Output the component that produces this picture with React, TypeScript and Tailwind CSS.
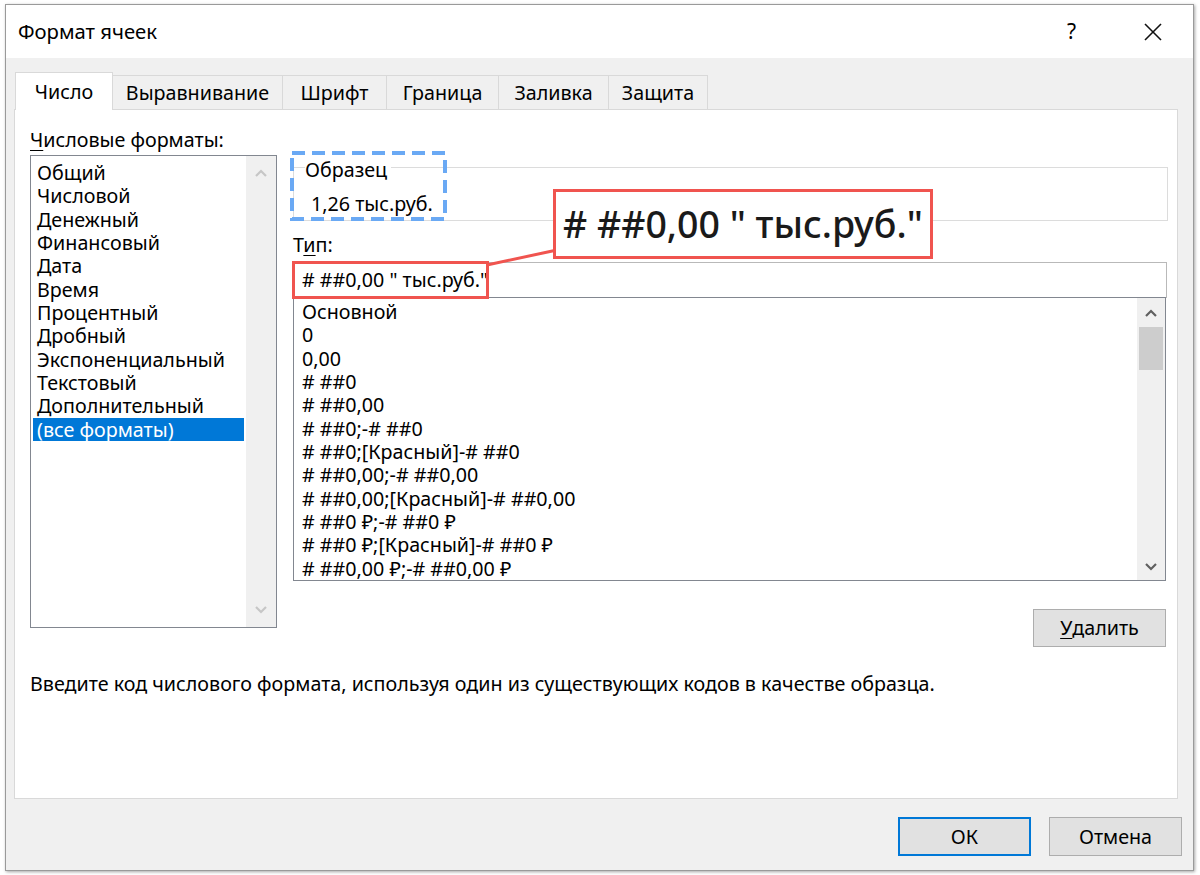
import React from "react";

const cats = [
  "Общий",
  "Числовой",
  "Денежный",
  "Финансовый",
  "Дата",
  "Время",
  "Процентный",
  "Дробный",
  "Экспоненциальный",
  "Текстовый",
  "Дополнительный",
  "(все форматы)",
];

const types = [
  "Основной",
  "0",
  "0,00",
  "# ##0",
  "# ##0,00",
  "# ##0;-# ##0",
  "# ##0;[Красный]-# ##0",
  "# ##0,00;-# ##0,00",
  "# ##0,00;[Красный]-# ##0,00",
  "# ##0 ₽;-# ##0 ₽",
  "# ##0 ₽;[Красный]-# ##0 ₽",
  "# ##0,00 ₽;-# ##0,00 ₽",
];

function Chevron({ up, color }: { up?: boolean; color: string }) {
  return (
    <svg width="12" height="8" viewBox="0 0 12 8">
      <polyline
        points={up ? "1,7 6,2 11,7" : "1,1 6,6 11,1"}
        fill="none"
        stroke={color}
        strokeWidth="2.2"
      />
    </svg>
  );
}

export default function App() {
  return (
    <div className="relative w-[1200px] h-[875px] bg-white overflow-hidden font-['Noto_Sans',sans-serif] text-black text-[19.7px]">
      <div className="ml-[5px] mt-[4px] w-[1189px] h-[867px] border border-[#9a9a9a] shadow-[1px_1px_3px_rgba(0,0,0,0.35)] flex flex-col bg-[#f0f0f0]">
        {/* Title bar */}
        <div className="h-[53px] bg-white flex items-center shrink-0">
          <div className="pl-[12px] text-[20.3px]">Формат ячеек</div>
          <div className="flex-1" />
          <div className="text-[21px] mr-[68px]">?</div>
          <svg width="18" height="18" viewBox="0 0 18 18" className="mr-[31px]">
            <line x1="1" y1="1" x2="17" y2="17" stroke="#111" strokeWidth="1.6" />
            <line x1="17" y1="1" x2="1" y2="17" stroke="#111" strokeWidth="1.6" />
          </svg>
        </div>

        {/* Body */}
        <div className="flex-1 flex flex-col pl-[8px] pt-[14px]">
          {/* Tabs */}
          <div className="flex items-end h-[37px] ml-[1px] relative z-10">
            <div className="h-[38px] w-[98px] bg-white border border-b-0 border-[#d9d9d9] flex items-center justify-center self-start">
              Число
            </div>
            <div className="h-[34px] w-[170px] border-t border-r border-[#d9d9d9] flex items-center justify-center">
              Выравнивание
            </div>
            <div className="h-[34px] w-[104px] border-t border-r border-[#d9d9d9] flex items-center justify-center">
              Шрифт
            </div>
            <div className="h-[34px] w-[112px] border-t border-r border-[#d9d9d9] flex items-center justify-center">
              Граница
            </div>
            <div className="h-[34px] w-[110px] border-t border-r border-[#d9d9d9] flex items-center justify-center">
              Заливка
            </div>
            <div className="h-[34px] w-[99px] border-t border-r border-[#d9d9d9] flex items-center justify-center">
              Защита
            </div>
          </div>

          {/* Panel */}
          <div className="w-[1164px] h-[690px] bg-white border border-[#d9d9d9] flex flex-col pl-[15px]">
            <div className="flex items-start">
              {/* Left column */}
              <div className="w-[247px] pt-[19px] flex flex-col">
                <div className="leading-[22px]">
                  <span className="underline underline-offset-[3px]">Ч</span>исловые форматы:
                </div>
                <div className="mt-[4px] h-[473px] border border-[#828790] flex">
                  <div className="flex-1 pt-[5px]">
                    {cats.map((c, i) => (
                      <div
                        key={c}
                        className={
                          i === cats.length - 1
                            ? "h-[23.33px] leading-[23.33px] ml-[2px] mr-[2px] pl-[4px] bg-[#0078d7] text-white whitespace-nowrap"
                            : "h-[23.33px] leading-[23.33px] ml-[2px] mr-[2px] pl-[4px] whitespace-nowrap"
                        }
                      >
                        {c}
                      </div>
                    ))}
                  </div>
                  <div className="w-[30px] bg-[#f0f0f0] flex flex-col items-center justify-between pt-[13px] pb-[13px]">
                    <Chevron up color="#c6c6c6" />
                    <Chevron color="#c6c6c6" />
                  </div>
                </div>
              </div>

              {/* Right column */}
              <div className="ml-[16px] w-[875px] pt-[44px] flex flex-col">
                <fieldset className="border border-[#dcdcdc] pl-[11px] h-[67px]">
                  <legend className="pt-[6px] leading-[20px] pr-[4px]">Образец</legend>
                  <div className="pl-[6px] mt-[13px] leading-[22px]">1,26 тыс.руб.</div>
                </fieldset>
                <div className="mt-[13px] leading-[22px]">
                  Т<span className="underline underline-offset-[3px]">и</span>п:
                </div>
                <div className="mt-[6px] h-[36px] w-[874px] border border-[#b9b9b9] flex items-center pl-[8px]">
                  # ##0,00 " тыс.руб."
                </div>
                <div className="mt-[-1px] h-[284px] w-[873px] border border-[#828790] flex overflow-hidden">
                  <div className="flex-1 pt-[2px] pl-[8px] overflow-hidden">
                    {types.map((t) => (
                      <div key={t} className="h-[23.33px] leading-[23.33px] whitespace-nowrap">
                        {t}
                      </div>
                    ))}
                  </div>
                  <div className="w-[28px] bg-[#f0f0f0] flex flex-col items-center pt-[11px] pb-[9px]">
                    <Chevron up color="#606060" />
                    <div className="mt-[10px] w-[24px] h-[43px] bg-[#cdcdcd]" />
                    <div className="flex-1" />
                    <Chevron color="#606060" />
                  </div>
                </div>
                <div className="flex justify-end mt-[28px] pr-[2px]">
                  <div className="w-[133px] h-[38px] bg-[#e1e1e1] border border-[#adadad] flex items-center justify-center">
                    <span className="underline underline-offset-[3px]">У</span>далить
                  </div>
                </div>
              </div>
            </div>
            <div className="mt-[26px] leading-[22px] whitespace-nowrap">
              Введите код числового формата, используя один из существующих кодов в качестве образца.
            </div>
          </div>

          {/* Buttons */}
          <div className="flex justify-end gap-[18px] pr-[11px] mt-[18px]">
            <div className="w-[133px] h-[39px] bg-[#e1e1e1] border-2 border-[#0078d7] flex items-center justify-center">
              ОК
            </div>
            <div className="w-[133px] h-[39px] bg-[#e1e1e1] border border-[#adadad] flex items-center justify-center">
              Отмена
            </div>
          </div>
        </div>
      </div>

      {/* Annotations overlay */}
      <svg className="absolute left-[290px] top-[151px]" width="158" height="70" viewBox="0 0 158 70">
        <rect x="2" y="2" width="153" height="66" fill="none" stroke="#6aa9f4" strokeWidth="4" strokeDasharray="13 7" />
      </svg>
      <div className="absolute left-[292px] top-[261px] w-[197px] h-[38px] border-[3px] border-[#f0544f]" />
      <svg className="absolute left-[485px] top-[246px]" width="74" height="22" viewBox="0 0 74 22">
        <line x1="2" y1="19" x2="72" y2="4" stroke="#f0544f" strokeWidth="3" />
      </svg>
      <div className="absolute left-[553px] top-[189px] w-[380px] h-[70px] border-[3px] border-[#f0544f] bg-white flex items-center pl-[7px] text-[37.5px] font-medium text-[#1a1a1a] whitespace-nowrap">
        # ##0,00 " тыс.руб."
      </div>
    </div>
  );
}
